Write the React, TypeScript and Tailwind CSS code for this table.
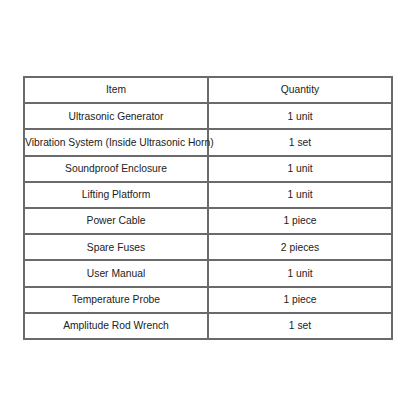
const rows = [
  ['Ultrasonic Generator', '1 unit'],
  ['Vibration System (Inside Ultrasonic Horn)', '1 set'],
  ['Soundproof Enclosure', '1 unit'],
  ['Lifting Platform', '1 unit'],
  ['Power Cable', '1 piece'],
  ['Spare Fuses', '2 pieces'],
  ['User Manual', '1 unit'],
  ['Temperature Probe', '1 piece'],
  ['Amplitude Rod Wrench', '1 set'],
]

export default function App() {
  return (
    <div className="w-[416px] h-[416px] bg-white pt-[76px] px-[23px]" style={{ fontFamily: '"Liberation Sans", Arial, sans-serif' }}>
      <table className="w-[370px] border-collapse table-fixed text-[10.3px] text-[#222]">
        <thead>
          <tr className="h-[26.2px]">
            <th className="border-2 border-[#6a6a6a] p-0 font-normal text-center whitespace-nowrap">Item</th>
            <th className="border-2 border-[#6a6a6a] p-0 font-normal text-center whitespace-nowrap">Quantity</th>
          </tr>
        </thead>
        <tbody>
          {rows.map(([item, qty]) => (
            <tr key={item} className="h-[26.2px]">
              <td className="border-2 border-[#6a6a6a] p-0 text-center whitespace-nowrap">{item}</td>
              <td className="border-2 border-[#6a6a6a] p-0 text-center whitespace-nowrap">{qty}</td>
            </tr>
          ))}
        </tbody>
      </table>
    </div>
  )
}
